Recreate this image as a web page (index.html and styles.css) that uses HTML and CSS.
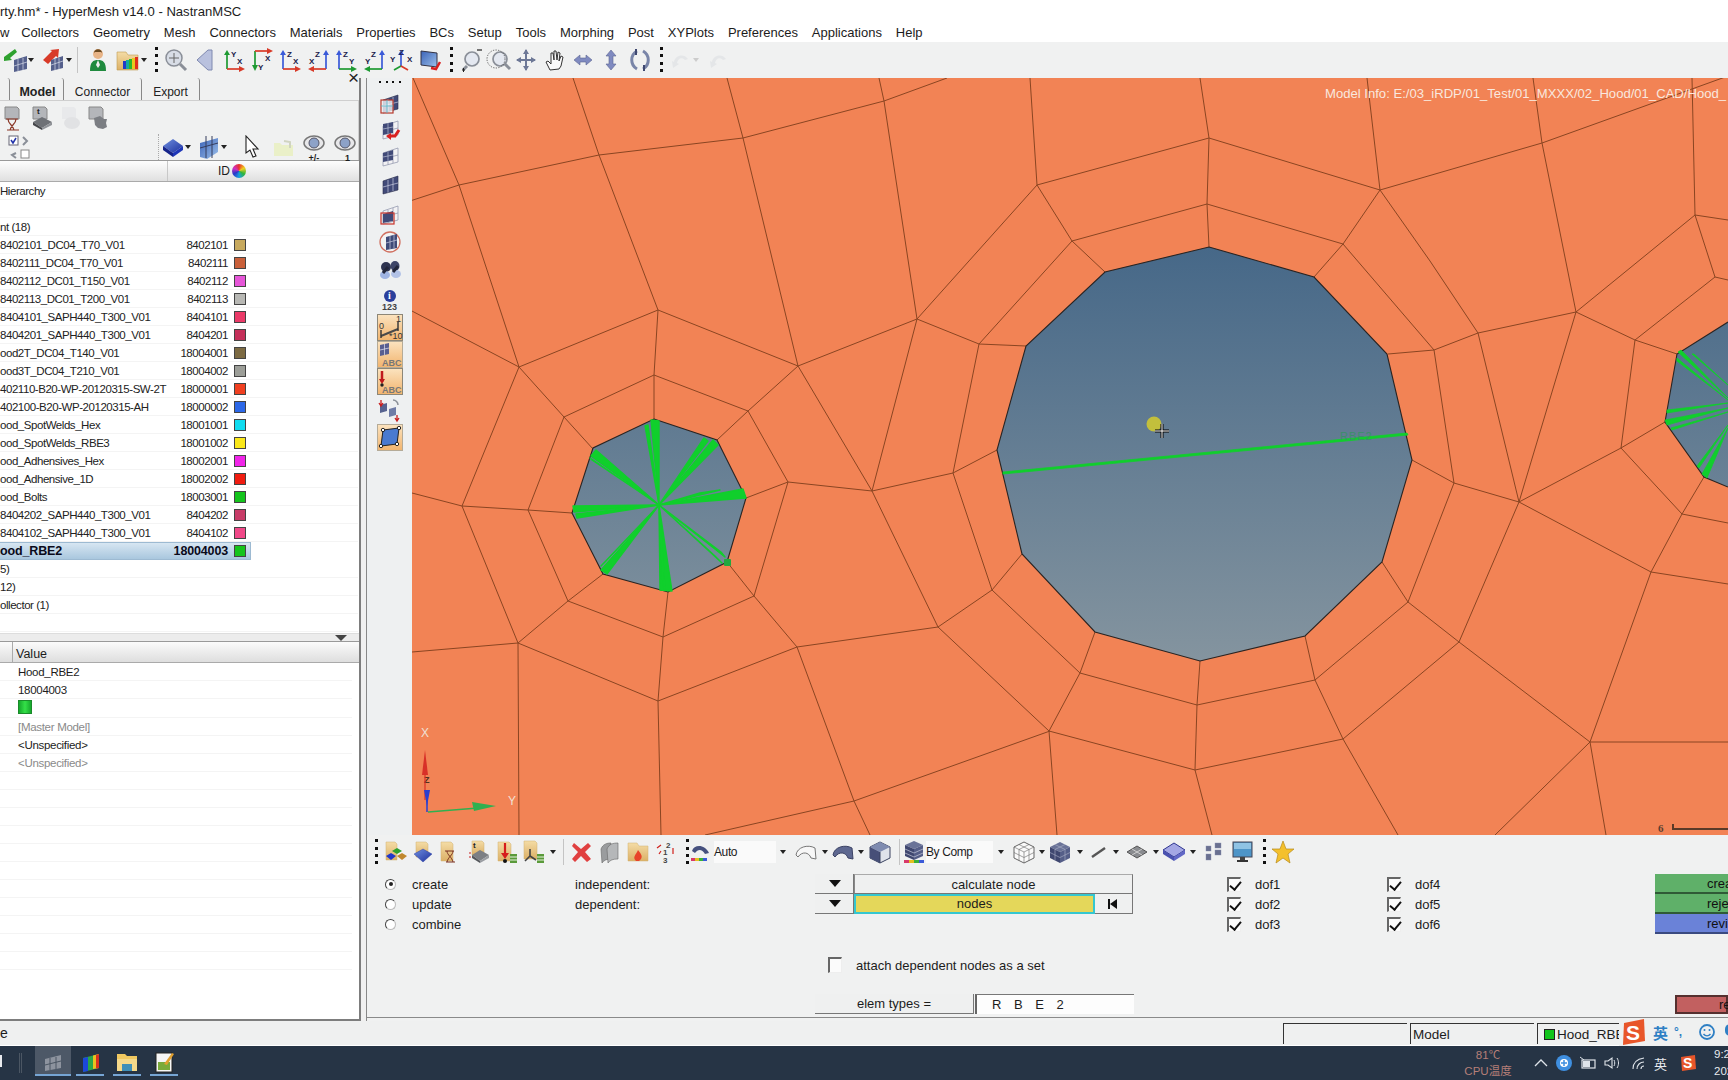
FILE: index.html
```html
<!DOCTYPE html>
<html lang="en">
<head>
<meta charset="utf-8">
<title>HyperMesh v14.0 - NastranMSC</title>
<link rel="stylesheet" href="styles.css">
</head>
<body>
<svg class="defs" aria-hidden="true">
<defs>
<linearGradient id="gFold" x1="0" y1="0" x2="0" y2="1"><stop offset="0" stop-color="#f4dca6"/><stop offset="1" stop-color="#dcb066"/></linearGradient>
<linearGradient id="gBlue" x1="0" y1="0" x2="1" y2="1"><stop offset="0" stop-color="#6f8fe0"/><stop offset="1" stop-color="#1c2f9c"/></linearGradient>
<linearGradient id="gTile" x1="0" y1="0" x2="0" y2="1"><stop offset="0" stop-color="#fbe3bf"/><stop offset="1" stop-color="#f2b46e"/></linearGradient>
<linearGradient id="gSheet" x1="0" y1="0" x2="1" y2="1"><stop offset="0" stop-color="#3b63b8"/><stop offset="1" stop-color="#9cc0ea"/></linearGradient>
<linearGradient id="gSky" gradientUnits="userSpaceOnUse" x1="0" y1="247" x2="0" y2="661"><stop offset="0" stop-color="#466888"/><stop offset="1" stop-color="#84949f"/></linearGradient>

<g id="mesh"><polygon points="5,9 20,4 20,18 5,22" fill="#414a78" stroke="#2a2d4a" stroke-width=".6"/><path d="M10 8v12.5M15 6v13M5 15l15-4" stroke="#c8cce0" stroke-width=".7" fill="none"/></g>
<g id="meshwire"><polygon points="5,9 20,4 20,18 5,22" fill="#f2f2f4" stroke="#8a8fa8" stroke-width=".7"/><path d="M10 8v12.5M15 6v13M5 15l15-4" stroke="#8a8fa8" stroke-width=".7" fill="none"/></g>
<g id="m1"><use href="#mesh"/><rect x="3" y="9" width="12" height="13" fill="#fff" fill-opacity=".75" stroke="#b5382a" stroke-width="1.2"/><path d="M3 15h12M9 9v13" stroke="#57b8c8" stroke-width=".8"/></g>
<g id="m2"><use href="#meshwire"/><polygon points="5,7 15,5 15,16 5,18" fill="#414a78"/><path d="M10 6v11M5 12l10-2" stroke="#c8cce0" stroke-width=".6"/><path d="M21 13l-4 6-6 0" stroke="#d91f1f" stroke-width="3" fill="none"/><polygon points="13,16 8,19 13,23" fill="#d91f1f"/></g>
<g id="m3"><use href="#meshwire"/><polygon points="5,9 15,6 15,16 5,18" fill="#414a78"/><path d="M10 8v9M5 13l10-2" stroke="#c8cce0" stroke-width=".6"/></g>
<g id="m5"><use href="#meshwire"/><polygon points="5,12 15,9 15,19 5,21" fill="#414a78"/><rect x="3" y="11" width="13" height="11" fill="none" stroke="#c9322a" stroke-width="1.2"/></g>
<g id="m6"><circle cx="12" cy="12" r="10" fill="#f3f3f3" stroke="#d07060" stroke-width="1.3"/><polygon points="8,7 19,4 19,18 8,20" fill="#3f4a78"/><path d="M12 6v13M16 5v13M8 13l11-3" stroke="#c8cce0" stroke-width=".7"/></g>
<g id="bino"><ellipse cx="8" cy="9" rx="5" ry="5" fill="#2e3450"/><ellipse cx="17" cy="8" rx="4.5" ry="5" fill="#3d4568"/><ellipse cx="7" cy="17" rx="5" ry="4" fill="#9fb4e2"/><ellipse cx="18" cy="16" rx="5" ry="4" fill="#b2c2e6"/><path d="M5 15l5-6M15 14l5-6" stroke="#22263a" stroke-width="3"/></g>
<g id="t1"><rect x=".5" y=".5" width="25" height="26" fill="url(#gTile)" stroke="#8d8778"/><path d="M4 22l17-7" stroke="#4a4a4a" stroke-width="2"/><path d="M4 16v8M21 8v9" stroke="#333" stroke-width="1.4"/><text class="tt" x="2" y="15">0</text><text class="tt" x="19" y="8">1</text><text class="tt" x="12" y="25">*10'</text></g>
<g id="t2"><rect x=".5" y=".5" width="25" height="26" fill="url(#gTile)" stroke="#b5ab98"/><polygon points="3,4 12,2 12,13 3,15" fill="#5a5f90"/><path d="M7.500 3v11M3 9l9-2" stroke="#e4e4f2" stroke-width=".7"/><text class="ta" x="5" y="25">ABC</text></g>
<g id="t3"><rect x=".5" y=".5" width="25" height="26" fill="url(#gTile)" stroke="#8d8778"/><path d="M5 3v11" stroke="#c0191b" stroke-width="2.500"/><polygon points="2,11 8,11 5,16" fill="#c0191b"/><circle cx="5" cy="17" r="1.700" fill="#222"/><text class="ta" x="5" y="25">ABC</text></g>
<g id="swap"><polygon points="2,7 9,5 9,13 2,15" fill="#56628f"/><polygon points="11,11 18,9 18,17 11,19" fill="#6f7ca6"/><path d="M3 2v5M1 5l2 3 2-3" stroke="#c81c1c" stroke-width="1.300" fill="none"/><path d="M19 17v5M17 20l2 3 2-3" stroke="#c81c1c" stroke-width="1.300" fill="none"/><path d="M15 2a5 5 0 0 1 5 5" stroke="#8b9098" stroke-width="1.500" fill="none"/></g>
<g id="t4"><rect x=".5" y=".5" width="25" height="26" fill="url(#gTile)" stroke="#b5ab98"/><polygon points="6,6 22,4 20,20 4,22" fill="#4a7ad0" stroke="#222"/><g fill="#fff" stroke="#222"><circle cx="6" cy="6" r="1.700"/><circle cx="22" cy="4" r="1.700"/><circle cx="20" cy="20" r="1.700"/><circle cx="4" cy="22" r="1.700"/></g></g>

<g id="imp"><path d="M1 9l11-8 2 3-7 6 2 2-8 1z" fill="#2ea12e"/><polygon points="11,12 24,8 24,21 11,24" fill="#55608c"/><path d="M15 11v12M20 10v12M11 18l13-4" stroke="#d9dcea" stroke-width=".7"/></g>
<g id="exp"><path d="M3 12l9-9-2-1 9-1-1 9-2-2-8 8z" fill="#d83a28"/><polygon points="11,12 23,8 23,20 11,23" fill="#55608c"/><path d="M15 11v11M19 10v11M11 17l12-4" stroke="#d9dcea" stroke-width=".7"/></g>
<g id="user"><circle cx="12" cy="6" r="5" fill="#e8b487"/><path d="M8 5c0-5 8-5 8 0l-1-1H9z" fill="#6a4a22"/><path d="M4 23c0-9 3-11 8-11s8 2 8 11z" fill="#1f8a3e"/><path d="M12 12l-2 5 2 3 2-3z" fill="#eee"/></g>
<g id="colorfold"><path d="M1 4h9l2 3h10v15H1z" fill="url(#gFold)" stroke="#c09a50" stroke-width=".6"/><g><rect x="7" y="13" width="3" height="8" fill="#2039c8"/><rect x="10" y="12" width="3" height="9" fill="#15a8a0"/><rect x="13" y="11" width="3" height="10" fill="#2bb52c"/><rect x="16" y="10" width="3" height="11" fill="#e8c81c"/><rect x="19" y="9" width="3" height="12" fill="#e0301c"/></g></g>
<g id="zfit"><circle cx="11" cy="10" r="8" fill="#d8dde6" stroke="#8a8f98" stroke-width="1.500"/><path d="M11 5v10M6 10h10" stroke="#666" stroke-width="1"/><path d="M17 16l6 6" stroke="#8a8f98" stroke-width="3"/></g>
<g id="back"><polygon points="2,12 13,2 17,2 17,22 13,22" fill="#b9c1de" stroke="#7f89b0"/></g>

<g id="a1"><path d="M5 21V6" stroke="#1e9a32" stroke-width="1.700"/><polygon points="2,7 8,7 5,2" fill="#1e9a32"/><path d="M5 21h13" stroke="#d83a28" stroke-width="1.700"/><polygon points="17,18 17,24 23,21" fill="#d83a28"/><text class="ax" x="9" y="9">Y</text><text class="ax" x="15" y="16">X</text></g>
<g id="a2"><path d="M5 3v15" stroke="#1e9a32" stroke-width="1.700"/><polygon points="2,17 8,17 5,23" fill="#1e9a32"/><path d="M5 3h13" stroke="#d83a28" stroke-width="1.700"/><polygon points="17,0 17,6 23,3" fill="#d83a28"/><text class="ax" x="8" y="22">Y</text><text class="ax" x="15" y="13">X</text></g>
<g id="a3"><path d="M5 21V6" stroke="#3a5ad8" stroke-width="1.700"/><polygon points="2,7 8,7 5,2" fill="#3a5ad8"/><path d="M5 21h13" stroke="#d83a28" stroke-width="1.700"/><polygon points="17,18 17,24 23,21" fill="#d83a28"/><text class="ax" x="9" y="9">Z</text><text class="ax" x="15" y="16">X</text></g>
<g id="a4"><path d="M20 21V6" stroke="#3a5ad8" stroke-width="1.700"/><polygon points="17,7 23,7 20,2" fill="#3a5ad8"/><path d="M20 21H7" stroke="#d83a28" stroke-width="1.700"/><polygon points="8,18 8,24 2,21" fill="#d83a28"/><text class="ax" x="9" y="9">Z</text><text class="ax" x="3" y="16">X</text></g>
<g id="a5"><path d="M5 21V6" stroke="#3a5ad8" stroke-width="1.700"/><polygon points="2,7 8,7 5,2" fill="#3a5ad8"/><path d="M5 21h13" stroke="#1e9a32" stroke-width="1.700"/><polygon points="17,18 17,24 23,21" fill="#1e9a32"/><text class="ax" x="9" y="9">Z</text><text class="ax" x="15" y="16">Y</text></g>
<g id="a6"><path d="M20 21V6" stroke="#3a5ad8" stroke-width="1.700"/><polygon points="17,7 23,7 20,2" fill="#3a5ad8"/><path d="M20 21H7" stroke="#1e9a32" stroke-width="1.700"/><polygon points="8,18 8,24 2,21" fill="#1e9a32"/><text class="ax" x="9" y="9">Z</text><text class="ax" x="3" y="16">Y</text></g>
<g id="a7"><path d="M12 18V6" stroke="#3a5ad8" stroke-width="1.700"/><polygon points="9,7 15,7 12,2" fill="#3a5ad8"/><path d="M12 18l-7 4" stroke="#1e9a32" stroke-width="1.700"/><path d="M12 18l7 4" stroke="#d83a28" stroke-width="1.700"/><text class="ax" x="1" y="14">Y</text><text class="ax" x="10" y="7">Z</text><text class="ax" x="18" y="14">X</text></g>
<g id="a8"><polygon points="2,3 18,5 18,19 2,17" fill="url(#gSheet)" stroke="#334"/><path d="M21 14l-4 7-5-1" stroke="#d91f1f" stroke-width="2.500" fill="none"/></g>

<g id="zminus"><circle cx="11" cy="11" r="7" fill="#e4e8f0" stroke="#8a8f98" stroke-width="1.700"/><path d="M6 18l-4 4" stroke="#8a8f98" stroke-width="3"/><path d="M16 2h5" stroke="#555" stroke-width="1.600"/><path d="M1 22h3M2.500 20v4" stroke="#222" stroke-width="1"/></g>
<g id="zbox"><circle cx="13" cy="11" r="7" fill="#e4e8f0" stroke="#8a8f98" stroke-width="1.700"/><path d="M18 16l5 5" stroke="#8a8f98" stroke-width="3"/><circle cx="9" cy="11" r="9" fill="none" stroke="#444" stroke-width=".8" stroke-dasharray="1.300 1.300"/></g>
<g id="pan"><path d="M12 2v20M3 12h18" stroke="#6d7896" stroke-width="2"/><polygon points="12,1 9,6 15,6" fill="#6d7896"/><polygon points="12,23 9,18 15,18" fill="#6d7896"/><polygon points="2,12 7,9 7,15" fill="#6d7896"/><polygon points="22,12 17,9 17,15" fill="#6d7896"/></g>
<g id="hand"><path d="M7 22l-4-8 2-1 3 3V5l2 0 1 7 0-9 2 0 1 9 1-8 2 1-1 8 2-5 2 1-2 9-2 3z" fill="#fafafa" stroke="#333" stroke-width="1"/></g>
<g id="larr"><path d="M3 12l6-5v3h6V7l6 5-6 5v-3H9v3z" fill="#7f8ac0" stroke="#5d6590" stroke-width=".6"/></g>
<g id="varr"><path d="M12 2l5 6h-3v8h3l-5 6-5-6h3V8H7z" fill="#7f8ac0" stroke="#5d6590" stroke-width=".6"/></g>
<g id="rot"><path d="M9 3C2 7 2 17 9 21M15 3c7 4 7 14 0 18" stroke="#7985a8" stroke-width="3" fill="none"/><path d="M8 1v6M16 17v6" stroke="#3f4870" stroke-width="2"/></g>
<g id="undo"><path d="M5 14c1-7 10-9 14-3l-3 1c-3-3-7-2-8 3l2 1-6 4-1-7z" fill="#e4e6e8"/></g>

<g id="cubes"><path d="M2 2h9l2 2v16H2z" fill="url(#gFold)" stroke="#d0b070" stroke-width=".5"/><polygon points="13,8 18,11 13,14 8,11" fill="#2ea12e"/><polygon points="7,13 12,16 7,20 2,16" fill="#2238c8"/><polygon points="18,13 23,16 18,20 13,16" fill="#c0882e"/></g>
<g id="fcube"><path d="M5 2h10l2 2v13H5z" fill="url(#gFold)" stroke="#d0b070" stroke-width=".5"/><polygon points="12,9 21,14 12,22 3,14" fill="url(#gBlue)" stroke="#1c2f9c" stroke-width=".4"/></g>
<g id="fhour"><path d="M3 2h10l2 2v17H3z" fill="url(#gFold)" stroke="#d0b070" stroke-width=".5"/><path d="M7 11h9M8 22h9M9 11c0 4 5 6 6 11M15 11c0 4-5 6-6 11" stroke="#7a3020" stroke-width="1" fill="none"/></g>
<g id="ftop"><path d="M5 1h10l2 2v12H5z" fill="url(#gFold)" stroke="#d0b070" stroke-width=".5"/><polygon points="13,10 22,15 13,21 5,15" fill="#7c7f84"/><polygon points="5,15 13,21 13,23 5,18" fill="#55585c"/><polygon points="13,21 22,15 22,18 13,23" fill="#9a9da2"/><text class="fx" x="6" y="8">t</text><path d="M3 12v8" stroke="#c81c1c" stroke-width="1" stroke-dasharray="2 2"/></g>
<g id="fdown"><path d="M3 2h11l2 2v17H3z" fill="url(#gFold)" stroke="#d0b070" stroke-width=".5"/><path d="M10 3v13" stroke="#d61d1d" stroke-width="2.200"/><polygon points="6,13 14,13 10,19" fill="#d61d1d"/><circle cx="10" cy="21" r="2" fill="#111"/><rect x="15" y="14" width="7" height="9" fill="#5a9a3a"/><path d="M15 17h7M15 20h7" stroke="#e7f3df" stroke-width="1"/></g>
<g id="fline"><path d="M2 1h11l2 2v16H2z" fill="url(#gFold)" stroke="#d0b070" stroke-width=".5"/><path d="M8 9v7l-5 5M8 16l6 4" stroke="#444" stroke-width="1.600" fill="none"/><rect x="15" y="14" width="7" height="9" fill="#5a9a3a"/><path d="M15 17h7M15 20h7" stroke="#e7f3df" stroke-width="1"/></g>
<g id="redx"><path d="M5 3l7 6 7-6 3 3-6 6 6 7-4 3-6-6-6 6-3-3 6-7-6-6z" fill="#e04040"/></g>
<g id="sheets"><path d="M3 9c2-5 6-6 10-6v16c-4 0-7 1-9 4z" fill="#9a9c9e" stroke="#666" stroke-width=".6"/><path d="M9 9c2-5 6-6 11-6v16c-5 0-8 1-10 4z" fill="#b5b7b9" stroke="#666" stroke-width=".6"/></g>
<g id="ffire"><path d="M2 3h9l2 3h9v15H2z" fill="url(#gFold)" stroke="#d0b070" stroke-width=".5"/><path d="M10 21c-4-4 0-6 2-11 3 4 6 7 1 11z" fill="#e8432a"/></g>
<g id="nums"><text class="nm" x="12" y="8">2</text><text class="nm" x="9" y="15">1</text><text class="nm" x="9" y="23">3</text><path d="M3 8l4-3M5 14l2-3M19 8v6" stroke="#d0211c" stroke-width="1.200" fill="none"/></g>
<g id="auto"><path d="M2 11c2-7 13-7 17 2l-4 1c-3-5-7-5-10-1z" fill="#45507e"/><rect x="1" y="18" width="4" height="3" fill="#d83a6a"/><rect x="5" y="18" width="4" height="3" fill="#e5c020"/><rect x="9" y="18" width="4" height="3" fill="#3ab03a"/><rect x="13" y="18" width="4" height="3" fill="#3a5ad8"/></g>
<g id="shell1"><path d="M2 15C3 7 14 4 21 8l1 11-5-1c-2-6-9-7-13-1z" fill="#f7f7f7" stroke="#777"/></g>
<g id="shell2"><path d="M2 15C3 7 14 4 21 8l1 11-5-1c-2-6-9-7-13-1z" fill="#5e6890" stroke="#3b4264"/></g>
<g id="bcube"><polygon points="12,2 22,7 22,18 12,23 2,18 2,7" fill="#dfe2ea" stroke="#3a4260"/><polygon points="12,2 22,7 12,12 2,7" fill="#7f8bb0"/><polygon points="2,7 12,12 12,23 2,18" fill="#474f78"/><path d="M12 12v11" stroke="#3a4260"/></g>
<g id="stack"><polygon points="12,1 21,5 12,9 3,5" fill="#6a7398"/><polygon points="3,5 12,9 12,20 3,16" fill="#3f4770"/><polygon points="12,9 21,5 21,16 12,20" fill="#555e88"/><path d="M3 9l9 4 9-4M3 13l9 4 9-4" stroke="#c5c9da" stroke-width=".7" fill="none"/><rect x="2" y="20" width="5" height="3" fill="#d83a6a"/><rect x="7" y="20" width="5" height="3" fill="#e5c020"/><rect x="12" y="20" width="5" height="3" fill="#3ab03a"/><rect x="17" y="20" width="5" height="3" fill="#3a5ad8"/></g>
<g id="wire"><polygon points="12,2 22,7 22,18 12,23 2,18 2,7" fill="#fafafa" stroke="#666"/><path d="M2 7l10 5 10-5M12 12v11M7 4.500l10 5M17 4.500L7 9.500M2 12.500l10 5 10-5M7 9.500v11M17 9.500v11" stroke="#666" stroke-width=".6" fill="none"/></g>
<g id="solid"><polygon points="12,2 22,7 12,12 2,7" fill="#6a7398"/><polygon points="2,7 12,12 12,23 2,18" fill="#3f4770"/><polygon points="12,12 22,7 22,18 12,23" fill="#555e88"/><path d="M2 12.500l10 5 10-5M7 4.500l10 5M17 4.500L7 9.500M7 9.500v11M17 9.500v11" stroke="#aeb3c9" stroke-width=".6" fill="none"/></g>
<g id="lin"><path d="M5 17l13-9" stroke="#555" stroke-width="2.400"/></g>
<g id="diam"><polygon points="12,6 22,12 12,18 2,12" fill="#8a8c90" stroke="#555"/><path d="M7 9l10 6M17 9L7 15" stroke="#ddd" stroke-width=".8"/></g>
<g id="slab"><polygon points="12,3 23,10 12,17 1,10" fill="#a4a7e4" stroke="#2e3590" stroke-width="1"/><polygon points="1,10 12,17 12,21 1,14" fill="#4a52b0"/><polygon points="12,17 23,10 23,14 12,21" fill="#6268c6"/></g>
<g id="squares"><g fill="#6a7090" stroke="#888fae" stroke-width=".4"><rect x="3" y="6" width="5" height="5"/><rect x="3" y="14" width="5" height="6"/><rect x="12" y="3" width="6" height="5"/><rect x="12" y="10" width="6" height="5"/></g></g>
<g id="monitor"><rect x="2" y="2" width="19" height="15" fill="#4e95c8" stroke="#445"/><rect x="3" y="3" width="17" height="6" fill="#8fc3e4"/><rect x="9" y="17" width="5" height="3" fill="#444"/><rect x="6" y="20" width="11" height="2" fill="#333"/></g>
<g id="star"><polygon points="12,1 15,9 23,9 17,14 19,23 12,18 5,23 7,14 1,9 9,9" fill="#f4c02c" stroke="#b68a1a" stroke-width=".7"/></g>

<g id="paneltime"><path d="M3 1h12l2 2v10H3z" fill="#b4b6ba" stroke="#888"/><path d="M4 13h12M5 24h12M6 13c0 5 5 6 6 11M14 13c0 5-5 6-6 11" stroke="#8a3626" stroke-width="1.200" fill="none"/></g>
<g id="paneltop"><path d="M3 1h12l2 2v10H3z" fill="#b4b6ba" stroke="#888"/><polygon points="12,11 22,16 12,22 3,16" fill="#6e7176"/><polygon points="3,16 12,22 12,24 3,19" fill="#45474b"/><polygon points="12,22 22,16 22,19 12,24" fill="#909398"/><text class="fx" x="7" y="8">t</text></g>
<g id="panelpale"><path d="M3 1h12l2 2v10H3z" fill="#e8e9eb"/><ellipse cx="13" cy="17" rx="8" ry="6" fill="#e1e2e4"/></g>
<g id="panelgear"><path d="M3 1h12l2 2v10H3z" fill="#b4b6ba" stroke="#888"/><path d="M8 12l6-2 4 3 3 0-1 4 1 4-4 2-5-1-3-3z" fill="#7b7e83"/></g>
<g id="chk"><rect x="1" y="1" width="9" height="9" fill="#fff" stroke="#667" /><path d="M3 5l2 3 3-5" stroke="#2233aa" stroke-width="1.500" fill="none"/><rect x="13" y="15" width="8" height="8" fill="#fff" stroke="#888"/><path d="M15 2l4 4-4 4M8 18l-4 2 4 3" stroke="#8a8f98" stroke-width="2" fill="none"/></g>
<g id="blue3"><polygon points="12,4 22,11 12,18 2,11" fill="url(#gBlue)"/><polygon points="2,11 12,18 12,22 2,15" fill="#15238a"/><polygon points="12,18 22,11 22,15 12,22" fill="#1e36b8"/></g>
<g id="bluesheet"><polygon points="3,8 21,3 21,17 10,24 3,22" fill="url(#gSheet)"/><path d="M9 1v22M15 1v22M3 13l18-5" stroke="#353c5c" stroke-width="1"/></g>
<g id="palefold"><path d="M2 8h6l2 2h11v11H2z" fill="#eaf0c8"/><path d="M12 6l6 1v6" stroke="#d0d4c0" stroke-width="2" fill="none"/></g>
<g id="eye"><ellipse cx="12" cy="9" rx="10" ry="7" fill="#e8e8ea" stroke="#777" stroke-width="1.500"/><circle cx="12" cy="9" r="5" fill="#8da2c8" stroke="#556"/></g>
<g id="cursor"><path d="M2 1v17l4-3 3 7 3-1-3-7 5 0z" fill="#fff" stroke="#222" stroke-width="1.100"/></g>
</defs>
</svg>

<header class="title">rty.hm* - HyperMesh v14.0 - NastranMSC</header>
<nav class="menu">
  <span class="mw">w</span><span>Collectors</span><span>Geometry</span><span>Mesh</span><span>Connectors</span><span>Materials</span><span>Properties</span><span>BCs</span><span>Setup</span><span>Tools</span><span>Morphing</span><span>Post</span><span>XYPlots</span><span>Preferences</span><span>Applications</span><span>Help</span>
</nav>
<div class="toolbar top">
  <svg class="ic m3"><use href="#imp"/></svg><i class="dd m1"></i>
  <svg class="ic m6"><use href="#exp"/></svg><i class="dd m2"></i><i class="vbar m5"></i>
  <svg class="ic m8"><use href="#user"/></svg><svg class="ic m6"><use href="#colorfold"/></svg><i class="dd m1"></i>
  <i class="dots m8"></i>
  <svg class="ic m5"><use href="#zfit"/></svg><svg class="ic m8"><use href="#back"/></svg>
  <svg class="ic m3"><use href="#a1"/></svg><svg class="ic m4"><use href="#a2"/></svg><svg class="ic m4"><use href="#a3"/></svg><svg class="ic m4"><use href="#a4"/></svg><svg class="ic m4"><use href="#a5"/></svg><svg class="ic m4"><use href="#a6"/></svg><svg class="ic m3"><use href="#a7"/></svg><svg class="ic m6"><use href="#a8"/></svg>
  <i class="dots m7"></i>
  <svg class="ic m8"><use href="#zminus"/></svg><svg class="ic m2"><use href="#zbox"/></svg><svg class="ic m3"><use href="#pan"/></svg><svg class="ic m5"><use href="#hand"/></svg><svg class="ic m4"><use href="#larr"/></svg><svg class="ic m4"><use href="#varr"/></svg><svg class="ic m5"><use href="#rot"/></svg>
  <i class="dots m8"></i>
  <svg class="ic m6"><use href="#undo"/></svg><i class="dd pale"></i><svg class="ic m8"><use href="#undo"/></svg>
</div>

<main class="main">
  <aside class="panel">
    <button class="close" type="button">×</button>
    <div class="tabs"><span class="tab stub"></span><span class="tab active">Model</span><span class="tab conn">Connector</span><span class="tab exp">Export</span></div>
    <div class="ptools">
      <div class="prow one">
        <svg class="ic m2"><use href="#paneltime"/></svg><svg class="ic m4"><use href="#paneltop"/></svg><svg class="ic m5"><use href="#panelpale"/></svg><svg class="ic m3"><use href="#panelgear"/></svg>
      </div>
      <div class="prow two">
        <svg class="ic m8"><use href="#chk"/></svg>
        <i class="dash"></i>
        <svg class="ic m2"><use href="#blue3"/></svg><i class="dd"></i>
        <svg class="ic m6"><use href="#bluesheet"/></svg><i class="dd"></i>
        <svg class="cursor m8"><use href="#cursor"/></svg>
        <svg class="ic m4"><use href="#palefold"/></svg>
        <span class="eye m6"><svg class="ic"><use href="#eye"/></svg><b>+/-</b></span>
        <span class="eye m7"><svg class="ic"><use href="#eye"/></svg><b class="r">1</b></span>
      </div>
    </div>
    <div class="thead"><span class="th-name"></span><span class="th-id">ID</span><span class="wheel"></span></div>
    <ul class="tree">
      <li><span>Hierarchy</span></li>
      <li></li>
      <li><span>nt (18)</span></li>
      <li><span>8402101_DC04_T70_V01</span><em>8402101</em><i class="sw" style="background:#c7a95e"></i></li>
      <li><span>8402111_DC04_T70_V01</span><em>8402111</em><i class="sw" style="background:#c9603a"></i></li>
      <li><span>8402112_DC01_T150_V01</span><em>8402112</em><i class="sw" style="background:#e656d8"></i></li>
      <li><span>8402113_DC01_T200_V01</span><em>8402113</em><i class="sw" style="background:#b8b8b4"></i></li>
      <li><span>8404101_SAPH440_T300_V01</span><em>8404101</em><i class="sw" style="background:#ea3a68"></i></li>
      <li><span>8404201_SAPH440_T300_V01</span><em>8404201</em><i class="sw" style="background:#c5305a"></i></li>
      <li><span>ood2T_DC04_T140_V01</span><em>18004001</em><i class="sw" style="background:#7c6a42"></i></li>
      <li><span>ood3T_DC04_T210_V01</span><em>18004002</em><i class="sw" style="background:#9c9e98"></i></li>
      <li><span>402110-B20-WP-20120315-SW-2T</span><em>18000001</em><i class="sw" style="background:#f04020"></i></li>
      <li><span>402100-B20-WP-20120315-AH</span><em>18000002</em><i class="sw" style="background:#2c68e8"></i></li>
      <li><span>ood_SpotWelds_Hex</span><em>18001001</em><i class="sw" style="background:#10dcf0"></i></li>
      <li><span>ood_SpotWelds_RBE3</span><em>18001002</em><i class="sw" style="background:#fbe81a"></i></li>
      <li><span>ood_Adhensives_Hex</span><em>18002001</em><i class="sw" style="background:#f024e8"></i></li>
      <li><span>ood_Adhensive_1D</span><em>18002002</em><i class="sw" style="background:#f01c10"></i></li>
      <li><span>ood_Bolts</span><em>18003001</em><i class="sw" style="background:#14c41c"></i></li>
      <li><span>8404202_SAPH440_T300_V01</span><em>8404202</em><i class="sw" style="background:#c83c68"></i></li>
      <li><span>8404102_SAPH440_T300_V01</span><em>8404102</em><i class="sw" style="background:#f04888"></i></li>
      <li class="sel"><span>ood_RBE2</span><em>18004003</em><i class="sw" style="background:#14c41c"></i></li>
      <li><span>5)</span></li>
      <li><span>12)</span></li>
      <li><span>ollector (1)</span></li>
      <li></li>
    </ul>
    <div class="split"><i class="tri"></i></div>
    <div class="vhead"><span class="vh-a"></span><span class="vh-t">Value</span></div>
    <ul class="vals">
      <li>Hood_RBE2</li>
      <li>18004003</li>
      <li><i class="vsw"></i></li>
      <li class="dim">[Master Model]</li>
      <li>&lt;Unspecified&gt;</li>
      <li class="dim">&lt;Unspecified&gt;</li>
      <li></li><li></li><li></li><li></li><li></li><li></li><li></li><li></li><li></li><li></li><li></li>
    </ul>
  </aside>

  <section class="work">
    <div class="view">
      <div class="side">
        <i class="hdots"></i>
        <svg class="ic"><use href="#m1"/></svg>
        <svg class="ic s2"><use href="#m2"/></svg>
        <svg class="ic s3"><use href="#m3"/></svg>
        <svg class="ic s4"><use href="#mesh"/></svg>
        <svg class="ic s6"><use href="#m5"/></svg>
        <svg class="ic s4"><use href="#m6"/></svg>
        <svg class="ic s4"><use href="#bino"/></svg>
        <span class="info">i</span>
        <span class="n123">123</span>
        <svg class="tile s1"><use href="#t1"/></svg>
        <svg class="tile"><use href="#t2"/></svg>
        <svg class="tile"><use href="#t3"/></svg>
        <svg class="ic s3"><use href="#swap"/></svg>
        <svg class="tile s2"><use href="#t4"/></svg>
      </div>
      <div class="canvas">
        <svg class="mesh" viewBox="412 78 1316 757" width="1316" height="757">
          <rect x="412" y="78" width="1316" height="757" fill="url(#gSky)"/>
          <path class="plate" fill-rule="evenodd" d="M412 78H1728V835H412Z M654 419L717 440L746 498L727 562L668 592L603 574L572 513L593 448Z M1209 247L1314 277L1387 354L1412 460L1382 562L1305 636L1200 661L1095 632L1022 554L997 450L1026 346L1105 272Z M1728 322L1677 354L1665 422L1704 477L1728 487Z"/>
          <path class="edges" d="M413 78L459 185L519 367M410 201L459 185L599 155L743 138L884 101L947 78M573 78L599 155L658 310M727 78L743 138L798 366M879 78L884 101L917 319M519 367L658 310L798 366L917 319M410 310L519 367L564 417L593 449M658 310L654 375L654 419M564 417L654 375L748 411L717 440M798 366L748 411M519 367L462 506M462 506L412 493M462 506L528 510L572 513M564 417L528 510L568 601L603 574M462 506L518 643L568 601L663 637L668 592M412 652L518 643L658 701L797 647L754 596L663 637M658 701L663 637M518 643L519 835M658 701L661 835M748 411L788 482L746 498M754 596L727 562M754 596L788 482L872 491M798 366L872 491M917 319L872 491L953 473M872 491L938 627L797 647M797 647L854 801L1050 731M854 801L870 835M854 801L705 835M917 319L1037 185L1209 138L1380 190L1542 143L1667 98L1728 76M1030 78L1037 185L1072 241L1105 272M1200 78L1209 138L1207 204L1209 247M1367 78L1380 190L1343 244L1314 277M1533 78L1542 143L1576 312M1692 78L1695 215L1728 220M917 319L979 344L1026 346M1072 241L979 344L953 473L997 450M1072 241L1207 204L1343 244L1434 350L1388 354M1434 350L1454 483L1412 460M1380 190L1430 261L1478 333M1434 350L1478 333L1576 312L1635 340L1677 354M1576 312L1695 215L1715 277L1635 340L1621 448L1665 422M1715 277L1728 280M1478 333L1519 502M1576 312L1519 502M1621 448L1519 502M1621 448L1682 514L1704 477M1454 483L1519 502L1651 572L1682 514L1728 523M1651 572L1728 584M1519 502L1459 642L1590 742L1651 572M1454 483L1408 602L1382 562M1408 602L1459 642M1408 602L1315 680L1305 636M1200 661L1197 705L1315 680M1095 632L1080 673L1197 705L1195 770L1343 739L1459 642M1315 680L1343 739L1398 835M1022 554L992 590L1080 673L1049 731L1195 770L1212 835M992 590L953 473M992 590L938 627L1049 731L1057 835M1590 742L1728 742M1590 742L1495 835M1590 742L1606 835"/>
          <path class="rim" d="M654 419L717 440L746 498L727 562L668 592L603 574L572 513L593 448Z M1209 247L1314 277L1387 354L1412 460L1382 562L1305 636L1200 661L1095 632L1022 554L997 450L1026 346L1105 272Z M1728 322L1677 354L1665 422L1704 477L1728 487"/>
          <g class="rbe">
            <polygon points="659,505 651,420 659,421"/><polygon points="659,505 645,426 648,425"/>
            <polygon points="659,505 713,440 718,445"/><polygon points="659,505 704,438 708,441"/>
            <polygon points="659,505 743,489 746,498"/><polygon points="659,505 700,493 720,490"/>
            <polygon points="659,505 573,506 574,512"/><polygon points="659,505 576,514 577,518"/>
            <polygon points="659,505 721,552 725,557"/><polygon points="659,505 715,556 722,563"/>
            <polygon points="659,505 660,590 672,591"/><polygon points="659,505 663,586 665,590"/>
            <polygon points="659,505 601,570 607,574"/><polygon points="659,505 605,562 601,566"/>
            <polygon points="659,505 596,450 591,456"/><polygon points="659,505 590,458 592,460"/>
          </g>
          <g class="rbe thin">
            <polygon points="1003,472 1407,433 1408,435 1003,474"/>
            <polygon points="1728,398 1678,352 1681,350"/><polygon points="1728,385 1692,354 1694,354"/><polygon points="1728,400 1677,358 1677,361"/>
            <polygon points="1728,403 1667,410 1667,413"/><polygon points="1728,408 1665,420 1667,425"/><polygon points="1728,412 1672,430 1671,428"/>
            <polygon points="1728,428 1702,474 1707,478"/><polygon points="1728,425 1697,466 1699,468"/>
          </g>
          <rect class="node" x="724" y="559" width="7" height="7" rx="1"/>
          <text class="rbelabel" x="1340" y="440">RBE2</text>
          <circle class="pick" cx="1154" cy="424" r="7.500"/>
          <path class="cross" d="M1162 424v14M1155 431h14"/>
          <path class="crossw" d="M1162 424v14M1155 431h14"/>
          <text class="minfo" x="1325" y="98">Model Info: E:/03_iRDP/01_Test/01_MXXX/02_Hood/01_CAD/Hood_</text>
          <text class="tri-x" x="421" y="737">X</text>
          <text class="tri-y" x="508" y="805">Y</text>
          <text class="tri-z" x="424" y="783">Z</text>
          <path class="tr-r" d="M425 760v40"/><polygon class="tr-rh" points="422,775 428,775 425,750"/>
          <polygon class="tr-bh" points="424,790 430,790 427,806"/><path class="tr-b" d="M427 800v12"/>
          <path class="tr-g" d="M428 812l50-4"/><polygon class="tr-gh" points="472,802 496,806 474,811"/>
          <text class="scale" x="1658" y="832">6</text>
          <path class="scale-b" d="M1673 824v5h55"/>
        </svg>
      </div>
    </div>

    <div class="toolbar bot">
      <i class="dots"></i>
      <svg class="ic m6"><use href="#cubes"/></svg><svg class="ic m3"><use href="#fcube"/></svg><svg class="ic m3"><use href="#fhour"/></svg><svg class="ic m5"><use href="#ftop"/></svg><svg class="ic m4"><use href="#fdown"/></svg><svg class="ic m3"><use href="#fline"/></svg><i class="dd m4"></i><i class="vbar m7"></i>
      <svg class="ic m5"><use href="#redx"/></svg><svg class="ic m5"><use href="#sheets"/></svg><svg class="ic m4"><use href="#ffire"/></svg><svg class="ic m4"><use href="#nums"/></svg>
      <i class="dots m8"></i>
      <svg class="ic m1"><use href="#auto"/></svg><span class="sel-box auto">Auto</span><i class="dd m4"></i>
      <svg class="ic m8"><use href="#shell1"/></svg><i class="dd m4"></i><svg class="ic m3"><use href="#shell2"/></svg><i class="dd m3"></i><svg class="ic m4"><use href="#bcube"/></svg><i class="vbar m7"></i>
      <svg class="ic m2"><use href="#stack"/></svg><span class="sel-box comp">By Comp</span><i class="dd m5"></i>
      <svg class="ic m8"><use href="#wire"/></svg><i class="dd m3"></i><svg class="ic m3"><use href="#solid"/></svg><i class="dd m5"></i><svg class="ic m4"><use href="#lin"/></svg><i class="dd m2"></i>
      <svg class="ic m6"><use href="#diam"/></svg><i class="dd m4"></i><svg class="ic m3"><use href="#slab"/></svg><i class="dd m4"></i><svg class="ic m7"><use href="#squares"/></svg><svg class="ic m4"><use href="#monitor"/></svg>
      <i class="dots m8"></i>
      <svg class="ic m5"><use href="#star"/></svg>
    </div>

    <form class="form">
      <div class="col radios">
        <label class="fr"><i class="radio on"></i>create</label>
        <label class="fr"><i class="radio"></i>update</label>
        <label class="fr"><i class="radio"></i>combine</label>
      </div>
      <div class="col ind">
        <span class="fr">independent:</span>
        <span class="fr">dependent:</span>
      </div>
      <div class="col mid">
        <div class="fr"><span class="btn drop"><i class="tridown"></i></span><span class="btn calc">calculate node</span></div>
        <div class="fr"><span class="btn drop"><i class="tridown"></i></span><span class="btn nodes">nodes</span><span class="btn rew"><i class="rewbar"></i><i class="rewtri"></i></span></div>
        <label class="fr attach"><i class="cb big"></i>attach dependent nodes as a set</label>
        <div class="fr elem"><span class="btn etype">elem types =</span><span class="einput">R B E 2</span></div>
      </div>
      <div class="col dofa">
        <label class="fr"><i class="cb"></i>dof1</label>
        <label class="fr"><i class="cb"></i>dof2</label>
        <label class="fr"><i class="cb"></i>dof3</label>
      </div>
      <div class="col dofb">
        <label class="fr"><i class="cb"></i>dof4</label>
        <label class="fr"><i class="cb"></i>dof5</label>
        <label class="fr"><i class="cb"></i>dof6</label>
      </div>
      <div class="col acts">
        <span class="act green">create</span>
        <span class="act green">reject</span>
        <span class="act blue">review</span>
        <span class="act red">return</span>
      </div>
    </form>
  </section>
</main>

<footer class="status">
  <span class="st-left">e</span>
  <span class="st-box"></span>
  <span class="st-box">Model</span>
  <span class="st-box wide"><i class="st-sw"></i>Hood_RBE2</span>
  <div class="ime">
    <svg width="28" height="28" viewBox="0 0 28 28"><path d="M5 5l20-4 1 22-22 4z" fill="#e8562a"/><text class="ime-s" x="7" y="22">S</text></svg>
    <span class="ime-t">英</span>
    <span class="ime-p">°,</span>
    <svg class="ime-smile" width="18" height="18" viewBox="0 0 18 18"><circle cx="9" cy="9" r="7" fill="none" stroke="#2e7fc4" stroke-width="1.800"/><path d="M5.500 11c2 2.500 5 2.500 7 0" stroke="#2e7fc4" stroke-width="1.400" fill="none"/><circle cx="6.500" cy="7" r="1" fill="#2e7fc4"/><circle cx="11.500" cy="7" r="1" fill="#2e7fc4"/></svg>
    <svg width="16" height="18" viewBox="0 0 16 18"><rect x="3" y="1" width="10" height="12" rx="5" fill="#2e7fc4"/><path d="M8 13v4" stroke="#2e7fc4" stroke-width="2"/></svg>
  </div>
</footer>

<div class="taskbar">
  <i class="win"></i>
  <i class="tsep"></i>
  <span class="task active"><svg class="ic"><polygon points="4,9 20,5 20,18 4,21" fill="#8d939e"/><path d="M9 8v12M15 7v12M4 15l16-4" stroke="#4a5562" stroke-width="1"/></svg></span>
  <span class="task"><svg class="ic"><polygon points="5,8 21,4 21,18 5,22" fill="#2aa54a"/><polygon points="5,8 10,7 10,21 5,22" fill="#1c48d8"/><polygon points="15,5.500 21,4 21,18 15,19" fill="#e8c020"/><polygon points="18,5 21,4 21,18 18,18.500" fill="#d83020"/></svg></span>
  <span class="task"><svg class="ic"><path d="M2 4h8l2 2h10v15H2z" fill="#f0c860"/><rect x="2" y="9" width="20" height="12" fill="#f5d98a"/><rect x="7" y="14" width="10" height="7" fill="#3f8fb8"/></svg></span>
  <span class="task"><svg class="ic"><rect x="4" y="3" width="16" height="19" fill="#f6f6f6" stroke="#222"/><rect x="6" y="12" width="12" height="8" fill="#7aaa3a"/><path d="M12 14l8-11 2 1-7 11z" fill="#e0a030"/></svg></span>
  <div class="tray">
    <span class="temp">81℃<br>CPU温度</span>
    <svg width="16" height="16" viewBox="0 0 16 16"><path d="M2 11l6-6 6 6" stroke="#dfe4ea" stroke-width="1.300" fill="none"/></svg>
    <svg width="18" height="18" viewBox="0 0 18 18"><circle cx="9" cy="9" r="8" fill="#3f8fe0"/><circle cx="9" cy="9" r="4" fill="#fff"/><path d="M9 6v6M6 9h6" stroke="#3f8fe0" stroke-width="1.500"/></svg>
    <svg width="18" height="16" viewBox="0 0 18 16"><rect x="3" y="5" width="13" height="8" fill="none" stroke="#dfe4ea" stroke-width="1.200"/><rect x="4" y="6" width="7" height="6" fill="#dfe4ea"/><path d="M1 2l4 3" stroke="#dfe4ea" stroke-width="1"/></svg>
    <svg width="18" height="16" viewBox="0 0 18 16"><path d="M2 6h3l4-3v10l-4-3H2z" fill="none" stroke="#dfe4ea" stroke-width="1.100"/><path d="M11 5c1 2 1 4 0 6M14 3c2 3 2 7 0 10" stroke="#dfe4ea" stroke-width="1" fill="none"/></svg>
    <svg class="m3" width="18" height="16" viewBox="0 0 18 16"><path d="M3 14c0-6 4-10 11-11M7 14c0-4 3-7 7-7M11 14c0-2 1-3 3-3" stroke="#dfe4ea" stroke-width="1.100" fill="none"/></svg>
    <span class="tray-t">英</span>
    <svg class="tray-s" width="18" height="18" viewBox="0 0 18 18"><path d="M2 3l14-2 1 14-14 2z" fill="#e8562a"/><text class="ime-s small" x="4" y="14">S</text></svg>
    <span class="clock">9:25<br>2024</span>
  </div>
</div>
</body>
</html>
```

FILE: styles.css
```css
*{box-sizing:border-box}
html,body{margin:0;padding:0}
body{width:1728px;height:1080px;overflow:hidden;background:#f0f0f0;color:#1c1c1c;font:13px "Liberation Sans",Arial,sans-serif;display:flex;flex-direction:column}
ul{list-style:none;margin:0;padding:0}
i,em{font-style:normal;display:block}
.defs{position:absolute;width:0;height:0}
.ic{flex:none;display:block;width:24px;height:24px;overflow:visible}
.m1{margin-left:1px}.m2{margin-left:2px}.m3{margin-left:3px}.m4{margin-left:4px}.m5{margin-left:5px}.m6{margin-left:6px}.m7{margin-left:7px}.m8{margin-left:8px}

.ax{font:bold 8px "Liberation Sans",sans-serif;fill:#20204a}
.tt{font:9px "Liberation Sans",sans-serif;fill:#333}
.ta{font:bold 9px "Liberation Sans",sans-serif;fill:#777}
.fx{font:bold 8px "Liberation Sans",sans-serif;fill:#222}
.nm{font:bold 8px "Liberation Sans",sans-serif;fill:#444}

.title{flex:none;height:22px;background:#fff;line-height:23px;white-space:nowrap;font-size:13.100px}
.menu{flex:none;height:20px;background:#fff;display:flex;gap:13.850px;line-height:21px;white-space:nowrap}
.mw{margin-right:-2px}
.toolbar{display:flex;align-items:center;flex:none;background:#f0f1f1}
.top{height:36px}
.dd{flex:none;width:0;height:0;border:3.500px solid transparent;border-top:4px solid #222;border-bottom:0}
.dd.pale{border-top-color:#ccc}
.vbar{flex:none;width:1px;height:26px;background:#c4c4c4}
.dots{flex:none;width:3px;height:26px;background:repeating-linear-gradient(#111 0 3px,transparent 3px 7.500px)}

.main{flex:none;height:943px;display:flex}
.panel{position:relative;flex:none;width:361px;border-right:2px solid #7d7d7d;border-bottom:2px solid #7d7d7d;display:flex;flex-direction:column;background:#f0f1f1}
.close{position:absolute;right:0;top:-8px;border:0;padding:0;background:none;font:19px/16px "Liberation Sans",sans-serif;color:#222}
.tabs{flex:none;height:22px;display:flex;align-items:flex-end;font-size:12px}
.tab{height:22px;line-height:28px;border-right:1px solid #888;border-top-right-radius:3px;text-align:center;color:#222}
.tab.stub{width:10px}
.tab.active{width:54px;font-weight:bold;font-size:12.500px;padding-left:2px}
.tab.conn{width:78px}
.tab.exp{width:58px}
.ptools{flex:none;height:60px;border-top:1px solid #cfcfcf;border-right:1px solid #cfcfcf;padding-top:4px}
.prow{display:flex;align-items:center;height:26px}
.prow.two{margin-top:3px;height:26px}
.dash{width:1px;height:26px;margin-left:126px;border-left:1px dotted #aaa}
.cursor{flex:none;display:block;width:24px;height:24px}
.cursor.m8{margin-left:17px}
.eye{position:relative;width:24px;height:26px;display:block}
.eye b{position:absolute;left:0;right:0;bottom:-3px;text-align:center;font:bold 9px/10px "Liberation Sans",sans-serif}
.eye b.r{text-align:right;right:7px}
.thead{flex:none;height:22px;display:flex;align-items:center;background:linear-gradient(#fdfdfd,#e0e0e0);border-top:1px solid #999;border-bottom:1px solid #aaa;font-size:12px}
.th-name{width:168px;height:100%;border-right:1px solid #c8c8c8}
.th-id{width:62px;text-align:right}
.wheel{width:14px;height:14px;border-radius:50%;margin-left:2px;background:conic-gradient(#e8302a,#f0d020,#2fb53a,#18a0e0,#2a38c8,#d030c0,#e8302a)}
.tree{flex:none;height:451px;background:#fff;overflow:hidden;font-size:11.500px;letter-spacing:-.45px;color:#222}
.tree li{height:18px;display:flex;align-items:center;width:358px;border-bottom:1px solid #f4f4f4;white-space:nowrap;position:relative}
.tree li span{flex:none;width:166px;overflow:visible}
.tree li em{width:62px;text-align:right;margin-right:0}
.tree .sw{width:12px;height:12px;margin-left:6px;border:1px solid #444}
.tree li.sel{width:251px;background:linear-gradient(#d7e6f2,#a9c7de);border:1px solid #9dbad2;border-left:0;font-weight:bold;color:#0a0a1a;font-size:12.500px;letter-spacing:-.15px}
.split{flex:none;height:8px;background:#ececec;border-top:1px solid #ddd;position:relative}
.tri{position:absolute;right:12px;top:1px;width:0;height:0;border:6px solid transparent;border-top:6px solid #444;border-bottom:0}
.vhead{flex:none;height:22px;display:flex;align-items:center;background:linear-gradient(#fbfbfb,#dedede);border-top:1px solid #999;border-bottom:1px solid #aaa;font-size:12.500px}
.vh-a{width:13px;height:100%;border-right:1px solid #aaa;margin-right:3px}
.vh-t{padding-top:4px}
.vals{flex:1;background:#fff;overflow:hidden;font-size:11.500px;letter-spacing:-.3px}
.vals li{height:18px;line-height:18px;padding-left:18px;border-bottom:1px solid #f4f4f4;width:352px}
.vals li.dim{color:#8a8a8a}
.vsw{width:14px;height:14px;margin-top:1px;background:linear-gradient(90deg,#16a82c,#34e048,#16a82c);border:1px solid #1a8a2a}

.work{flex:1;min-width:0;margin-left:5px;border-left:1px solid #888;display:flex;flex-direction:column;background:#f0f1f1}
.view{flex:none;height:757px;display:flex}
.side{flex:none;width:45px;display:flex;flex-direction:column;align-items:center;padding-top:3px;background:#eef0f1}
.hdots{flex:none;width:22px;height:2px;margin-bottom:8px;background:repeating-linear-gradient(90deg,#111 0 2px,transparent 2px 6.500px)}
.side .s1{margin-top:1px}.side .s2{margin-top:2px}.side .s3{margin-top:3px}.side .s4{margin-top:4px}.side .s6{margin-top:6px}
.tile{flex:none;display:block;width:26px;height:27px}
.info{flex:none;margin-top:8px;width:12px;height:12px;border-radius:50%;background:#2a3f9c;color:#fff;font:bold 10px/12px "Liberation Serif",serif;text-align:center}
.n123{flex:none;font:bold 9px/11px "Liberation Sans",sans-serif;color:#444}
.canvas{flex:none;width:1316px;height:757px;overflow:hidden}
.mesh{display:block}
.plate{fill:#f28355}
.edges{fill:none;stroke:#8a4522;stroke-width:1}
.rim{fill:none;stroke:#2a2422;stroke-width:1.100}
.rbe polygon{fill:#10cf2c;stroke:#10cf2c;stroke-width:1.400;stroke-linejoin:round}
.rbe.thin polygon{stroke-width:.8}
.node{fill:#22a83f}
.rbelabel{font:11px "Liberation Sans",sans-serif;fill:#3b8f6a;letter-spacing:1px}
.pick{fill:#c2bf3c}
.cross{stroke:#000;stroke-width:3;fill:none}
.crossw{stroke:#fff;stroke-width:1;fill:none}
.minfo{font:13.100px "Liberation Sans",sans-serif;fill:#f9e8df}
.tri-x,.tri-y{font:12px "Liberation Sans",sans-serif;fill:#efe0d6}
.tri-z{font:bold 9px "Liberation Sans",sans-serif;fill:#503020}
.tr-r{stroke:#d83028;stroke-width:1.200}
.tr-rh{fill:#d83028}
.tr-b{stroke:#2a3fd0;stroke-width:1.500}
.tr-bh{fill:#2a3fd0}
.tr-g{stroke:#30b050;stroke-width:1.500}
.tr-gh{fill:#30b050}
.scale{font:bold 11px "Liberation Serif",serif;fill:#5a4030}
.scale-b{stroke:#5a3a28;stroke-width:2;fill:none}

.bot{height:33px;padding-left:8px}
.sel-box{flex:none;height:22px;background:#fafafa;line-height:22px;font-size:12px;letter-spacing:-.4px}
.sel-box.auto{width:62px}
.sel-box.comp{width:67px}

.form{flex:none;height:150px;padding-top:6px;border-bottom:1px solid #8a8a8a;display:grid;grid-template-columns:208px 240px 412px 160px 268px 73px}
.col{display:flex;flex-direction:column;min-width:0}
.fr{display:flex;align-items:center;height:20px;white-space:nowrap}
.radios .fr{padding-left:18px}
.radio{flex:none;width:11px;height:11px;border-radius:50%;margin-right:16px;background:#fff;border:1px solid #bbb;border-top-color:#444;border-left-color:#444;position:relative}
.radio.on::after{content:"";position:absolute;left:2.500px;top:2.500px;width:4px;height:4px;border-radius:50%;background:#222}
.btn{display:block;height:20px;line-height:19px;text-align:center;background:#eff0f0;border-bottom:1.500px solid #777;border-right:1.500px solid #777;position:relative}
.drop{width:39px;flex:none}
.tridown{position:absolute;left:14px;top:6px;width:0;height:0;border:6px solid transparent;border-top:7px solid #111;border-bottom:0}
.calc{width:279px;border-top:1px solid #aaa;border-left:1px solid #888}
.nodes{width:241px;background:#e4d75a;border:2px solid #35c7d0;line-height:15px}
.rew{width:38px}
.rewbar{position:absolute;left:13px;top:5px;width:2px;height:10px;background:#111}
.rewtri{position:absolute;left:15px;top:5px;width:0;height:0;border:5px solid transparent;border-right:7px solid #111;border-left:0}
.attach{margin-top:40px;height:22px;padding-left:13px}
.cb{flex:none;width:14px;height:15px;background:#fbfbfb;border:1px solid #eee;border-top:2px solid #666;border-left:2px solid #666;position:relative;margin-right:14px}
.cb::after{content:"";position:absolute;left:3px;top:0;width:5px;height:9px;border:solid #111;border-width:0 2px 2px 0;transform:rotate(40deg)}
.cb.big{margin-right:14px;height:16px}
.cb.big::after{display:none}
.elem{margin-top:18px}
.etype{width:159px;background:#eff0f0}
.einput{display:block;width:159px;height:20px;margin-left:1px;background:#fdfdfd;border-left:2px solid #666;border-top:1px solid #777;padding-left:15px;line-height:19px;word-spacing:2px;letter-spacing:3.500px;white-space:nowrap}
.acts{overflow:hidden}
.act{display:block;flex:none;height:20px;line-height:19px;white-space:nowrap;text-align:left;padding-left:52px;border-bottom:2px solid #2f5a36;color:#111}
.act.green{background:#5fb069}
.act.blue{background:#6a82d8;border-bottom-color:#3a4a80}
.act.red{background:#c26060;border:2px solid #55302f;margin:61px 0 0 20px;height:19px;padding-left:42px;line-height:15px}

.status{position:relative;flex:none;height:25px;display:flex;align-items:flex-end;padding-bottom:1px;background:#eff0f0;border-bottom:1px solid #fff}
.st-left{width:1284px;align-self:center;font-size:14px}
.st-box{flex:none;width:124px;height:21px;margin-right:3px;border-top:1px solid #333;border-left:1px solid #333;line-height:21px;padding-left:2px;font-size:13.500px;white-space:nowrap;overflow:hidden;display:flex;align-items:center}
.st-box.wide{width:191px;margin-right:0}
.st-sw{flex:none;width:11px;height:11px;margin:0 2px 0 4px;background:#12c41c;border:1px solid #222}
.ime{position:absolute;left:1619px;top:-3px;width:109px;height:28px;background:#eff0f0;display:flex;align-items:center;gap:6px}
.ime>*{flex:none}
.ime-s{font:bold 21px "Liberation Sans",sans-serif;fill:#fff}
.ime-s.small{font-size:14px}
.ime-t{font:bold 15px "Noto Sans CJK SC",sans-serif;color:#2e7fc4}
.ime-p{font:bold 12px "Liberation Sans",sans-serif;color:#2e7fc4}
.ime-smile{margin-left:10px}

.taskbar{flex:none;height:34px;background:#263445;display:flex;align-items:stretch;color:#e8eaee}
.win{width:2px;height:12px;margin-top:9px;background:#e8eaee}
.tsep{width:3px;height:20px;margin:7px 0 0 17px;border-left:1px solid #4b5663;border-right:1px solid #4b5663}
.task{flex:none;width:28px;margin-left:9px;display:flex;align-items:center;justify-content:center;border-bottom:2px solid #76a5d4;padding-top:4px;height:30px}
.task.active{width:36px;margin-left:13px;background:#4d5867;margin-right:-4px;border-bottom-color:#76a5d4}
.tray{margin-left:auto;display:flex;align-items:center;gap:6px;height:34px;white-space:nowrap;position:relative;width:270px;padding-left:5px}
.tray>*{flex:none}
.temp{font:11.500px/16px "Liberation Sans","Noto Sans CJK SC",sans-serif;color:#b57f78;text-align:center;margin-right:14px;width:50px}
.tray-t{font:13px "Noto Sans CJK SC",sans-serif;color:#e8eaee}
.tray-s{margin-left:6px}
.clock{font:11.500px/17px "Liberation Sans",sans-serif;color:#e8eaee;margin-left:11px}
```
